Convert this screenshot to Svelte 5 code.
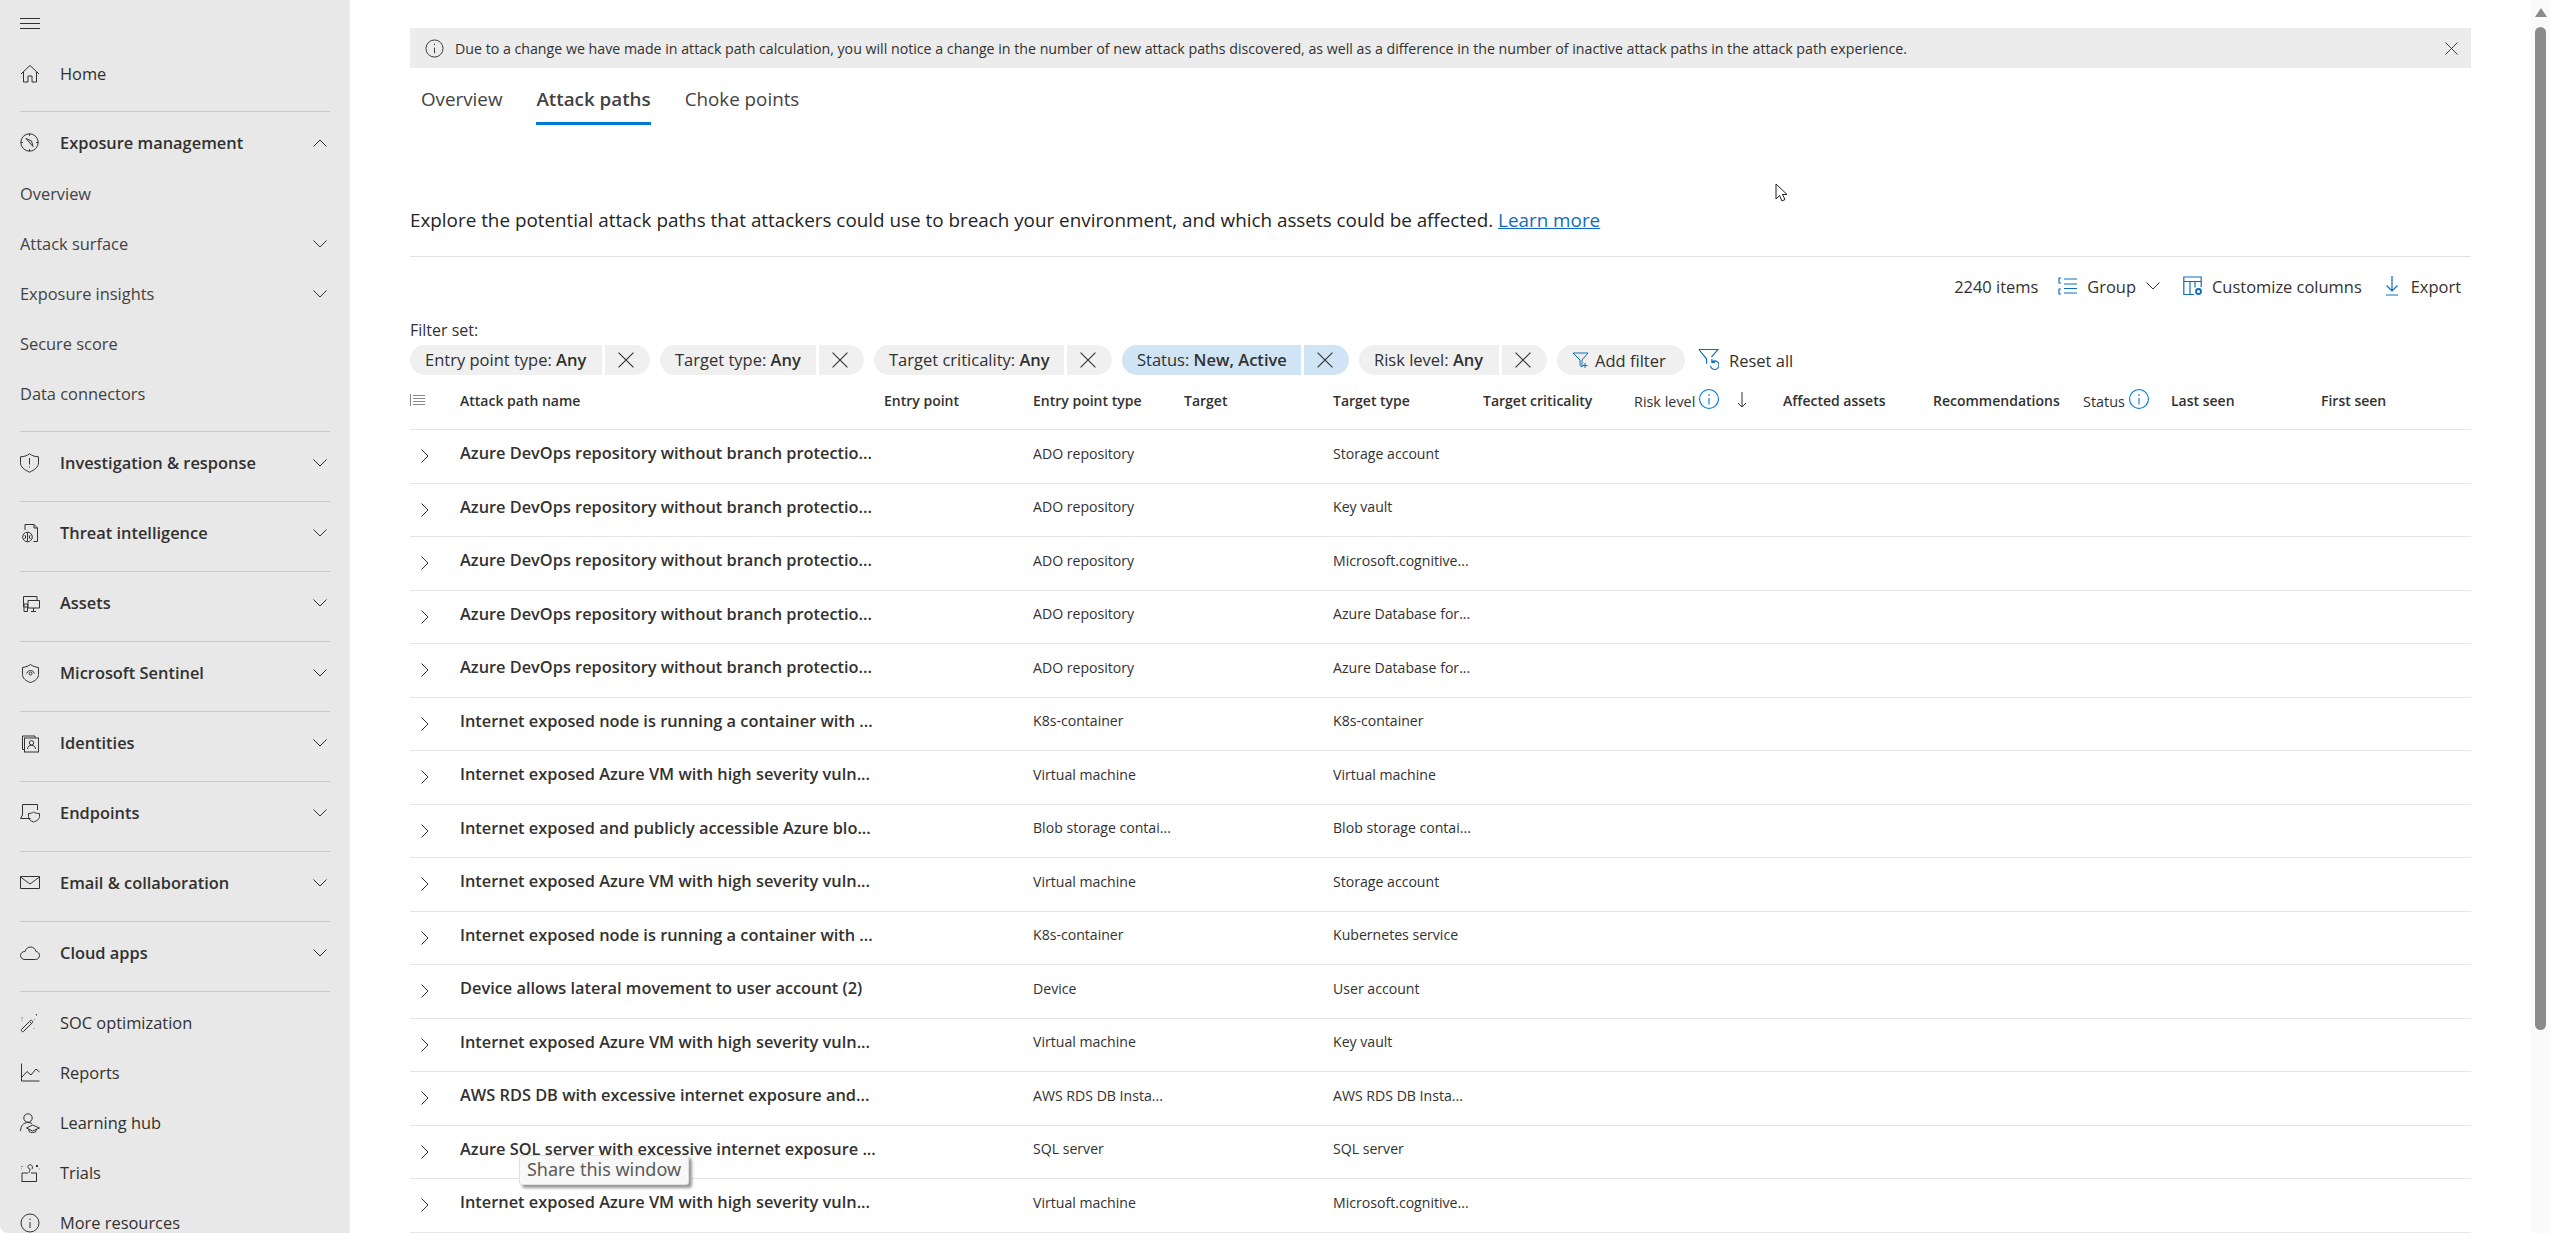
<script>
  const groups = [
    { label: 'Investigation & response', icon: 'shield' },
    { label: 'Threat intelligence', icon: 'threat' },
    { label: 'Assets', icon: 'assets' },
    { label: 'Microsoft Sentinel', icon: 'sentinel' },
    { label: 'Identities', icon: 'identities' },
    { label: 'Endpoints', icon: 'endpoints' },
    { label: 'Email & collaboration', icon: 'mail' },
    { label: 'Cloud apps', icon: 'cloud' }
  ];
  const subs = [
    { label: 'Overview' },
    { label: 'Attack surface', more: true },
    { label: 'Exposure insights', more: true },
    { label: 'Secure score' },
    { label: 'Data connectors' }
  ];
  const extras = [
    { label: 'SOC optimization', icon: 'wand' },
    { label: 'Reports', icon: 'chart' },
    { label: 'Learning hub', icon: 'learn' },
    { label: 'Trials', icon: 'trials' },
    { label: 'More resources', icon: 'info' }
  ];
  const chips = [
    { k: 'Entry point type:', v: 'Any', w: 192 },
    { k: 'Target type:', v: 'Any', w: 156 },
    { k: 'Target criticality:', v: 'Any', w: 190 },
    { k: 'Status:', v: 'New, Active', w: 179, on: true },
    { k: 'Risk level:', v: 'Any', w: 140 }
  ];
  const heads = ['Attack path name', 'Entry point', 'Entry point type', 'Target', 'Target type', 'Target criticality', 'Risk level', 'Affected assets', 'Recommendations', 'Status', 'Last seen', 'First seen'];
  const ado = 'Azure DevOps repository without branch protectio...';
  const vm = 'Internet exposed Azure VM with high severity vuln...';
  const node = 'Internet exposed node is running a container with ...';
  const rows = [
    [ado, 'ADO repository', 'Storage account'],
    [ado, 'ADO repository', 'Key vault'],
    [ado, 'ADO repository', 'Microsoft.cognitive...'],
    [ado, 'ADO repository', 'Azure Database for...'],
    [ado, 'ADO repository', 'Azure Database for...'],
    [node, 'K8s-container', 'K8s-container'],
    [vm, 'Virtual machine', 'Virtual machine'],
    ['Internet exposed and publicly accessible Azure blo...', 'Blob storage contai...', 'Blob storage contai...'],
    [vm, 'Virtual machine', 'Storage account'],
    [node, 'K8s-container', 'Kubernetes service'],
    ['Device allows lateral movement to user account (2)', 'Device', 'User account'],
    [vm, 'Virtual machine', 'Key vault'],
    ['AWS RDS DB with excessive internet exposure and...', 'AWS RDS DB Insta...', 'AWS RDS DB Insta...'],
    ['Azure SQL server with excessive internet exposure ...', 'SQL server', 'SQL server'],
    [vm, 'Virtual machine', 'Microsoft.cognitive...']
  ];
</script>

{#snippet navIcon(name)}
  <svg class="nav-icon" viewBox="0 0 20 20" fill="none" stroke="currentColor" stroke-width="1">
    {#if name === 'home'}
      <path d="M1 10 10 1.500 19 10M3.500 8v10H8v-6h4v6h4.500V8" />
    {:else if name === 'compass'}
      <circle cx="9.500" cy="9.500" r="8.700" /><path d="M6 5.500 13 13.500 11.500 8zM9.500 .8v2M9.500 16.200v2M.8 9.500h2M16.200 9.500h2" />
    {:else if name === 'shield'}
      <path d="M9.500 .8c2.500 2 5.500 2.800 9 3v6c0 4-3.500 7-9 9.400C4 16.800.5 13.800.5 9.800v-6c3.500-.2 6.500-1 9-3zM9.500 5v6.500M9.500 13.500v1" />
    {:else if name === 'threat'}
      <path d="M5 7V1.500h9l3.500 3.500v13.500h-4M14 1.500V5h3.500" /><circle cx="7.500" cy="14" r="4.800" /><path d="M7.500 9.500v9M4.500 12c1.500 1 1.500 3 0 4M10.500 12c-1.500 1-1.500 3 0 4" />
    {:else if name === 'assets'}
      <path d="M7 14H3.500V3.500H17V7M8 7.500h11.500v7.500H8zM13.500 15v3M11 18.500h5M4 11h3.500v7.500H4z" />
    {:else if name === 'sentinel'}
      <path d="M10.500 1.500c2 1.500 4.500 2.500 8 3v7c0 3.500-3 6.500-8 8-5-1.500-8-4.500-8-8v-7c3.500-.5 6-1.500 8-3z" /><circle cx="10.500" cy="10.500" r="1.500" /><path d="M6.500 10.500c1.500-4 6.500-4 8 0" />
    {:else if name === 'identities'}
      <path d="M4 16.500H2.500V3H15v2" /><rect x="4.500" y="5" width="14" height="14" /><circle cx="11.500" cy="9.800" r="2.200" /><path d="M7.500 16c0-5 8-5 8 0" />
    {:else if name === 'endpoints'}
      <path d="M2.500 12V1.500h15V7M.5 15.500h10M2.500 12l-2 3.500M13.500 9c1.500 1 3 1.500 6 1.500v3c0 2.500-2.500 4.500-6 5.500-3-1-5-3-5-5.500v-3c2.500 0 3.500-.5 5-1.500z" />
    {:else if name === 'mail'}
      <path d="M.5 3.500h19v12H.5zM.5 4 10 11 19.500 4" />
    {:else if name === 'cloud'}
      <path d="M5 16.500C2 16.500.5 14.500.5 12.500c0-2.500 2-4 4.500-4C6 5.500 8 4 10.500 4c3 0 5 2 5.500 4.500 2 .2 3.500 2 3.500 4s-1.500 4-4 4z" />
    {:else if name === 'wand'}
      <path d="m1.500 16.500 9-9c1-1 3 1 2 2l-9 9c-1 1-3-1-2-2zM9.500 8.500l2 2M2 4.500v1M16.500 1v1.500M14 15.500v.5M14.500 6v.5M2 7.500v.5" />
    {:else if name === 'chart'}
      <path d="M1.500 .5v17.500h18M1.500 14.500 7 8.500l4 3.500 5-6 3.500 3" />
    {:else if name === 'learn'}
      <circle cx="8" cy="5" r="4.200" /><path d="M.5 18c0-5 3-8.500 7.500-8.500 1.500 0 3 .5 4 1M12.500 12 19.500 15l-7 3-6-3zM9 16v2.500c2 1.500 5 1.500 7 0V16" />
    {:else if name === 'trials'}
      <path d="M1.500 18.500h15V10H11M2 10h6M2 10v8.500M12 6c1.500-3-1-5-3-4-2 1-1 4 1 4 0 2-1 3-1 4M2 3v1M17 2l1 1-1 1-1-1zM1 6h.5M19 6h.5" />
    {:else if name === 'info'}
      <circle cx="10" cy="10" r="9" /><path d="M10 9v6M10 5.500v1.500" />
    {/if}
  </svg>
{/snippet}

{#snippet chevron(up)}
  <svg class="chev" viewBox="0 0 14 8" fill="none" stroke="currentColor" stroke-width="1">
    <path d={up ? 'M.5 7.500 7 1l6.500 6.500' : 'M.5 .5 7 7l6.500-6.500'} />
  </svg>
{/snippet}

{#snippet cross()}
  <svg class="x" viewBox="0 0 14 14" fill="none" stroke="currentColor" stroke-width="1"><path d="m.5 .5 13 13M13.500 .5l-13 13" /></svg>
{/snippet}

{#snippet infoBlue()}
  <svg class="info-blue" viewBox="0 0 18 18" fill="none" stroke="#0078d4" stroke-width="1"><circle cx="9" cy="9" r="8.500" /><path d="M9 8v6M9 4.500V6" /></svg>
{/snippet}

<div class="screen">
  <aside class="side">
    <div class="burger"><i></i><i></i><i></i></div>
    <section class="group first">
      <div class="row">{@render navIcon('home')}<span>Home</span></div>
    </section>
    <section class="group expo">
      <div class="row strong">{@render navIcon('compass')}<span>Exposure management</span>{@render chevron(true)}</div>
      <div class="subs">
        {#each subs as s}
          <div class="row sub"><span>{s.label}</span>{#if s.more}{@render chevron(false)}{/if}</div>
        {/each}
      </div>
    </section>
    {#each groups as g}
      <section class="group">
        <div class="row strong">{@render navIcon(g.icon)}<span>{g.label}</span>{@render chevron(false)}</div>
      </section>
    {/each}
    <section class="extras">
      {#each extras as e}
        <div class="row">{@render navIcon(e.icon)}<span>{e.label}</span></div>
      {/each}
    </section>
  </aside>

  <main class="main">
    <div class="banner">
      <svg class="banner-info" viewBox="0 0 20 20" fill="none" stroke="#323130" stroke-width="1"><circle cx="10" cy="10" r="9" /><path d="M10 9v6M10 5v1.500" /></svg>
      <span>Due to a change we have made in attack path calculation, you will notice a change in the number of new attack paths discovered, as well as a difference in the number of inactive attack paths in the attack path experience.</span>
      <svg class="banner-x" viewBox="0 0 14 14" fill="none" stroke="#323130" stroke-width="1"><path d="m.5 .5 13 13M13.500 .5l-13 13" /></svg>
    </div>
    <nav class="tabs">
      <span class="tab">Overview</span>
      <span class="tab on">Attack paths</span>
      <span class="tab">Choke points</span>
    </nav>
    <p class="intro">Explore the potential attack paths that attackers could use to breach your environment, and which assets could be affected. <a href="#learn">Learn more</a></p>
    <div class="toolbar">
      <span>2240 items</span>
      <span class="tool">
        <svg viewBox="0 0 20 20" fill="none" stroke="#0f6cbd" stroke-width="1.200"><path d="M3 2H1v5h2M3 13H1v5h2M6 3h13M6 8h13M6 12.500h13M6 17h13" /></svg>
        Group
        <svg class="tool-chev" viewBox="0 0 14 8" fill="none" stroke="#323130" stroke-width="1"><path d="M.5 .5 7 7l6.500-6.500" /></svg>
      </span>
      <span class="tool cols">
        <svg viewBox="0 0 20 20" fill="none" stroke="#0f6cbd" stroke-width="1.200"><path d="M11 18.500H.8V1h17.400v10M.8 5.500h17.400M7 5.500v13M12 5.500v6" /><circle cx="15.500" cy="15.500" r="2.500" stroke-width="1.800" /></svg>
        Customize columns
      </span>
      <span class="tool">
        <svg viewBox="0 0 20 20" fill="none" stroke="#0f6cbd" stroke-width="1.200"><path d="M10 0v15M4.500 9.500l5.500 5.500 5.500-5.500M4 19h12" /></svg>
        Export
      </span>
    </div>
    <div class="filter-label">Filter set:</div>
    <div class="chips">
      {#each chips as c}
        <div class="chip" class:on={c.on}>
          <span class="chip-main" style="width:{c.w}px">{c.k} <b>{c.v}</b></span>
          <span class="chip-x">{@render cross()}</span>
        </div>
      {/each}
      <span class="add">
        <svg viewBox="0 0 18 18" fill="none" stroke="#0f6cbd" stroke-width="1"><path d="M1 2h15l-6 7v7l-2-1.500V9zM13 12v5M10.500 14.500h5" /></svg>
        Add filter
      </span>
      <span class="reset">
        <svg viewBox="0 0 22 24" fill="none" stroke="#0f6cbd" stroke-width="1.200"><path d="M1 1h20l-7 8M1 1l8 10v5M13 18a4.500 4.500 0 1 0 1.500-4M14.500 11v3.500H18" /></svg>
        Reset all
      </span>
    </div>
    <div class="table">
      <div class="grid head">
        <svg class="lines" viewBox="0 0 15 12" fill="none" stroke="#8a8886" stroke-width="1"><path d="M.5 0v12M3 1.500h12M3 4.500h12M3 7.500h12M3 10.500h12" /></svg>
        {#each heads as h}
          {#if h === 'Risk level' || h === 'Status'}
            <span class="th with-info"><em>{h}</em>{@render infoBlue()}{#if h === 'Risk level'}<svg class="sort" viewBox="0 0 10 16" fill="none" stroke="#323130" stroke-width="1"><path d="M5 0v15M1 11l4 4 4-4" /></svg>{/if}</span>
          {:else}
            <span class="th">{h}</span>
          {/if}
        {/each}
      </div>
      {#each rows as r}
        <div class="grid body">
          <svg class="expand" viewBox="0 0 8 14" fill="none" stroke="#323130" stroke-width="1"><path d="m.5 .5 6.500 6.500-6.500 6.500" /></svg>
          <span class="name">{r[0]}</span>
          <span></span>
          <span class="cell">{r[1]}</span>
          <span></span>
          <span class="cell">{r[2]}</span>
        </div>
      {/each}
    </div>
  </main>

  <div class="scroll">
    <div class="arrow"></div>
    <div class="thumb"></div>
  </div>

  <div class="tooltip">Share this window</div>
  <svg class="cursor" viewBox="0 0 13 19"><path d="M1 1v15l3.500-3.500L7 18l3-1.500L7.500 11.500H12z" fill="#fff" stroke="#222" stroke-width="1" /></svg>
</div>

<style>
  :global(body) {
    margin: 0;
    background: #fff;
  }
  .screen {
    display: flex;
    height: 100vh;
    overflow: hidden;
    position: relative;
    font-family: "Open Sans", "Noto Sans", sans-serif;
    color: #323130;
  }
  .side {
    width: 350px;
    flex: none;
    background: #e8e8e8;
    border-bottom-left-radius: 8px;
    font-size: 16.4px;
    color: #323130;
  }
  .burger {
    height: 48px;
    padding: 18px 0 0 20px;
    box-sizing: border-box;
  }
  .burger i {
    display: block;
    width: 20px;
    height: 1px;
    background: #323130;
    margin-bottom: 4px;
  }
  .group {
    padding: 6px 0 12px;
    border-bottom: 1px solid #c8c8c8;
    margin: 0 20px;
  }
  .group.first { padding-top: 1px; padding-bottom: 12px; }
  .group:not(.first):not(.expo) { padding-bottom: 13px; }
  .row {
    height: 50px;
    display: flex;
    align-items: center;
  }
  .row > span { flex: 1; white-space: nowrap; padding-bottom: 2px; }
  .nav-icon {
    width: 20px;
    height: 20px;
    margin-right: 20px;
    flex: none;
  }
  .strong { font-weight: 600; }
  .subs { padding-top: 1px; }
  .sub { font-weight: 400; color: #424242; }
  .chev {
    width: 14px;
    height: 8px;
    margin-right: 3px;
    flex: none;
    color: #323130;
  }
  .extras { padding: 6px 20px 0; }
  .main {
    flex: 1;
    min-width: 0;
    padding: 28px 60px 0;
  }
  .banner {
    height: 40px;
    background: #ececec;
    display: flex;
    align-items: center;
    font-size: 14.2px;
    padding: 0 15px;
    gap: 11px;
  }
  .banner span { flex: 1; white-space: nowrap; }
  .banner-info { width: 19px; height: 19px; flex: none; }
  .banner-x { width: 13px; height: 13px; flex: none; margin-right: -2px; }
  .tabs {
    height: 58px;
    box-sizing: border-box;
    padding-left: 11px;
    display: flex;
    gap: 34px;
    font-size: 18.8px;
  }
  .tab {
    height: 57px;
    box-sizing: border-box;
    padding-top: 18px;
    color: #424242;
  }
  .tab.on {
    font-weight: 600;
    border-bottom: 3px solid #0078d4;
    height: 57px;
  }
  .intro {
    margin: 0;
    height: 131px;
    padding-top: 80px;
    box-sizing: border-box;
    border-bottom: 1px solid #e1e1e1;
    font-size: 18.85px;
    line-height: 28px;
    color: #242424;
  }
  .intro a { color: #0f6cbd; text-decoration: underline; }
  .toolbar {
    height: 58px;
    display: flex;
    align-items: center;
    justify-content: flex-end;
    gap: 20px;
    font-size: 16.45px;
    padding-right: 10px;
  }
  .tool {
    display: flex;
    align-items: center;
    gap: 9px;
  }
  .tool.cols { margin-left: 3px; }
  .tool svg { width: 20px; height: 20px; flex: none; }
  .tool svg.tool-chev { width: 14px; height: 8px; margin-left: 1px; }
  .filter-label {
    height: 29px;
    font-size: 16px;
    line-height: 29px;
    margin-top: 1px;
  }
  .chips {
    display: flex;
    align-items: center;
    height: 30px;
    gap: 10px;
    font-size: 16.5px;
  }
  .chip {
    display: flex;
    gap: 3px;
    height: 30px;
  }
  .chip-main {
    background: #f0f0f0;
    border-radius: 15px 0 0 15px;
    padding-left: 15px;
    box-sizing: border-box;
    line-height: 30px;
    white-space: nowrap;
  }
  .chip-main b { font-weight: 600; }
  .chip-x {
    width: 45px;
    background: #f0f0f0;
    border-radius: 0 15px 15px 0;
    display: flex;
    align-items: center;
    justify-content: center;
  }
  .chip.on .chip-main, .chip.on .chip-x { background: #cfe4f5; }
  .x { width: 16px; height: 16px; margin-right: 3px; }
  .add {
    width: 128px;
    height: 30px;
    box-sizing: border-box;
    background: #f0f0f0;
    border-radius: 15px;
    display: flex;
    align-items: center;
    gap: 5px;
    padding-left: 15px;
    white-space: nowrap;
  }
  .add svg { width: 18px; height: 18px; }
  .reset {
    display: flex;
    align-items: center;
    gap: 10px;
    margin-left: 3px;
  }
  .reset svg { width: 21px; height: 24px; }
  .grid {
    display: grid;
    grid-template-columns: 50px 424px 149px 151px 149px 150px 151px 149px 150px 150px 88px 150px 1fr;
    align-items: center;
    border-bottom: 1px solid #e6e6e6;
    box-sizing: border-box;
  }
  .head { height: 55px; font-size: 14px; font-weight: 600; padding-bottom: 4px; }
  .lines { display: block; width: 15px; height: 12px; }
  .th { white-space: nowrap; }
  .with-info { display: flex; align-items: center; gap: 4px; }
  .with-info em { font-style: normal; font-weight: 400; padding-top: 3px; font-size: 14.4px; }
  .info-blue { width: 20px; height: 20px; margin-top: -2px; flex: none; }
  .sort { width: 10px; height: 16px; margin-left: 14px; flex: none; }
  .body { height: 53.5px; font-size: 14.1px; padding-bottom: 6px; }
  .expand { width: 8px; height: 14px; margin-left: 11px; margin-top: 6px; }
  .name { font-size: 16.35px; font-weight: 600; white-space: nowrap; }
  .cell { white-space: nowrap; }
  .scroll {
    width: 19px;
    flex: none;
    background: #fafafa;
    display: flex;
    flex-direction: column;
    align-items: center;
  }
  .arrow {
    margin-top: 8px;
    width: 0;
    height: 0;
    border-left: 6px solid transparent;
    border-right: 6px solid transparent;
    border-bottom: 9px solid #8b8b8b;
  }
  .thumb {
    margin-top: 10px;
    width: 11px;
    height: 1003px;
    border-radius: 6px;
    background: #8b8b8b;
  }
  .tooltip {
    position: absolute;
    left: 519px;
    top: 1155px;
    width: 170px;
    height: 30px;
    box-sizing: border-box;
    background: #f8f8f8;
    border: 1px solid #e0e0e0;
    border-radius: 3px;
    box-shadow: 3px 3px 3px #999;
    font-family: "Noto Sans", sans-serif;
    font-size: 18px;
    line-height: 27px;
    text-align: center;
    color: #5a5a5a;
  }
  .cursor {
    position: absolute;
    left: 1775px;
    top: 183px;
    width: 13px;
    height: 19px;
  }
</style>
